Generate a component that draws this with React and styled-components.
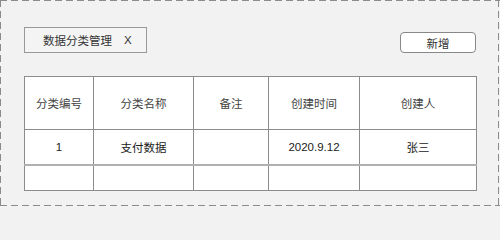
import React from "react";
import styled, { createGlobalStyle } from "styled-components";

const GlobalStyle = createGlobalStyle`
  html, body {
    margin: 0;
    padding: 0;
    background: #f2f2f2;
  }
  body {
    font-family: "Liberation Sans", "Noto Sans CJK SC", sans-serif;
  }
`;

const dash = "#8c8c8c";
const line = "#8c8c8c";

const Frame = styled.div`
  box-sizing: border-box;
  width: 500px;
  height: 207px;
  padding: 27px 24px 0;
  background-color: #f2f2f2;
  background-image:
    repeating-linear-gradient(90deg, ${dash} 0 7px, transparent 7px 11px),
    repeating-linear-gradient(90deg, ${dash} 0 7px, transparent 7px 11px),
    repeating-linear-gradient(180deg, ${dash} 0 7px, transparent 7px 11px),
    repeating-linear-gradient(180deg, ${dash} 0 7px, transparent 7px 11px);
  background-size: 100% 1px, 100% 1px, 1px 100%, 1px 100%;
  background-position: 0 0, 0 205px, 0 0, 498px 0;
  background-repeat: no-repeat;
`;

const Toolbar = styled.div`
  display: flex;
  justify-content: space-between;
  align-items: flex-end;
`;

const Tag = styled.div`
  box-sizing: border-box;
  display: flex;
  align-items: center;
  width: 123px;
  height: 26px;
  padding-left: 18px;
  border: 1px solid #999;
  background: #f4f4f4;
  color: #333;
  font-size: 11.5px;
`;

const Close = styled.span`
  margin-left: 12px;
`;

const Button = styled.button`
  box-sizing: border-box;
  width: 76px;
  height: 21px;
  padding: 0;
  border: 1px solid #888;
  border-radius: 4px;
  background: #fff;
  color: #333;
  font-family: inherit;
  font-size: 11.5px;
`;

const Table = styled.table`
  margin-top: 23px;
  width: 452px;
  table-layout: fixed;
  border-collapse: collapse;
  border-top: 1px solid ${line};
  background: #fff;
  color: #333;
  font-size: 11.5px;
  text-align: center;
`;

const Row = styled.tr`
  height: ${(p) => p.$h}px;
  border-bottom: ${(p) => (p.$thick ? "2px solid #b0b0b0" : `1px solid ${line}`)};
`;

const Cell = styled.td`
  padding: 0;
  border-left: 1px solid ${line};
  border-right: 1px solid ${line};
  color: ${(p) => (p.$head ? "#444" : "#222")};
`;

const widths = [69, 100, 75, 91, 117];
const headers = ["分类编号", "分类名称", "备注", "创建时间", "创建人"];
const rows = [["1", "支付数据", "", "2020.9.12", "张三"], ["", "", "", "", ""]];

const App = () => (
  <>
    <GlobalStyle />
    <Frame>
      <Toolbar>
        <Tag>
          数据分类管理<Close>X</Close>
        </Tag>
        <Button>新增</Button>
      </Toolbar>
      <Table>
        <colgroup>
          {widths.map((w, i) => (
            <col key={i} style={{ width: w }} />
          ))}
        </colgroup>
        <tbody>
          <Row $h={53}>
            {headers.map((h) => (
              <Cell key={h} $head>
                {h}
              </Cell>
            ))}
          </Row>
          <Row $h={35} $thick>
            {rows[0].map((c, i) => (
              <Cell key={i}>{c}</Cell>
            ))}
          </Row>
          <Row $h={26}>
            {rows[1].map((c, i) => (
              <Cell key={i}>{c}</Cell>
            ))}
          </Row>
        </tbody>
      </Table>
    </Frame>
  </>
);

export default App;
